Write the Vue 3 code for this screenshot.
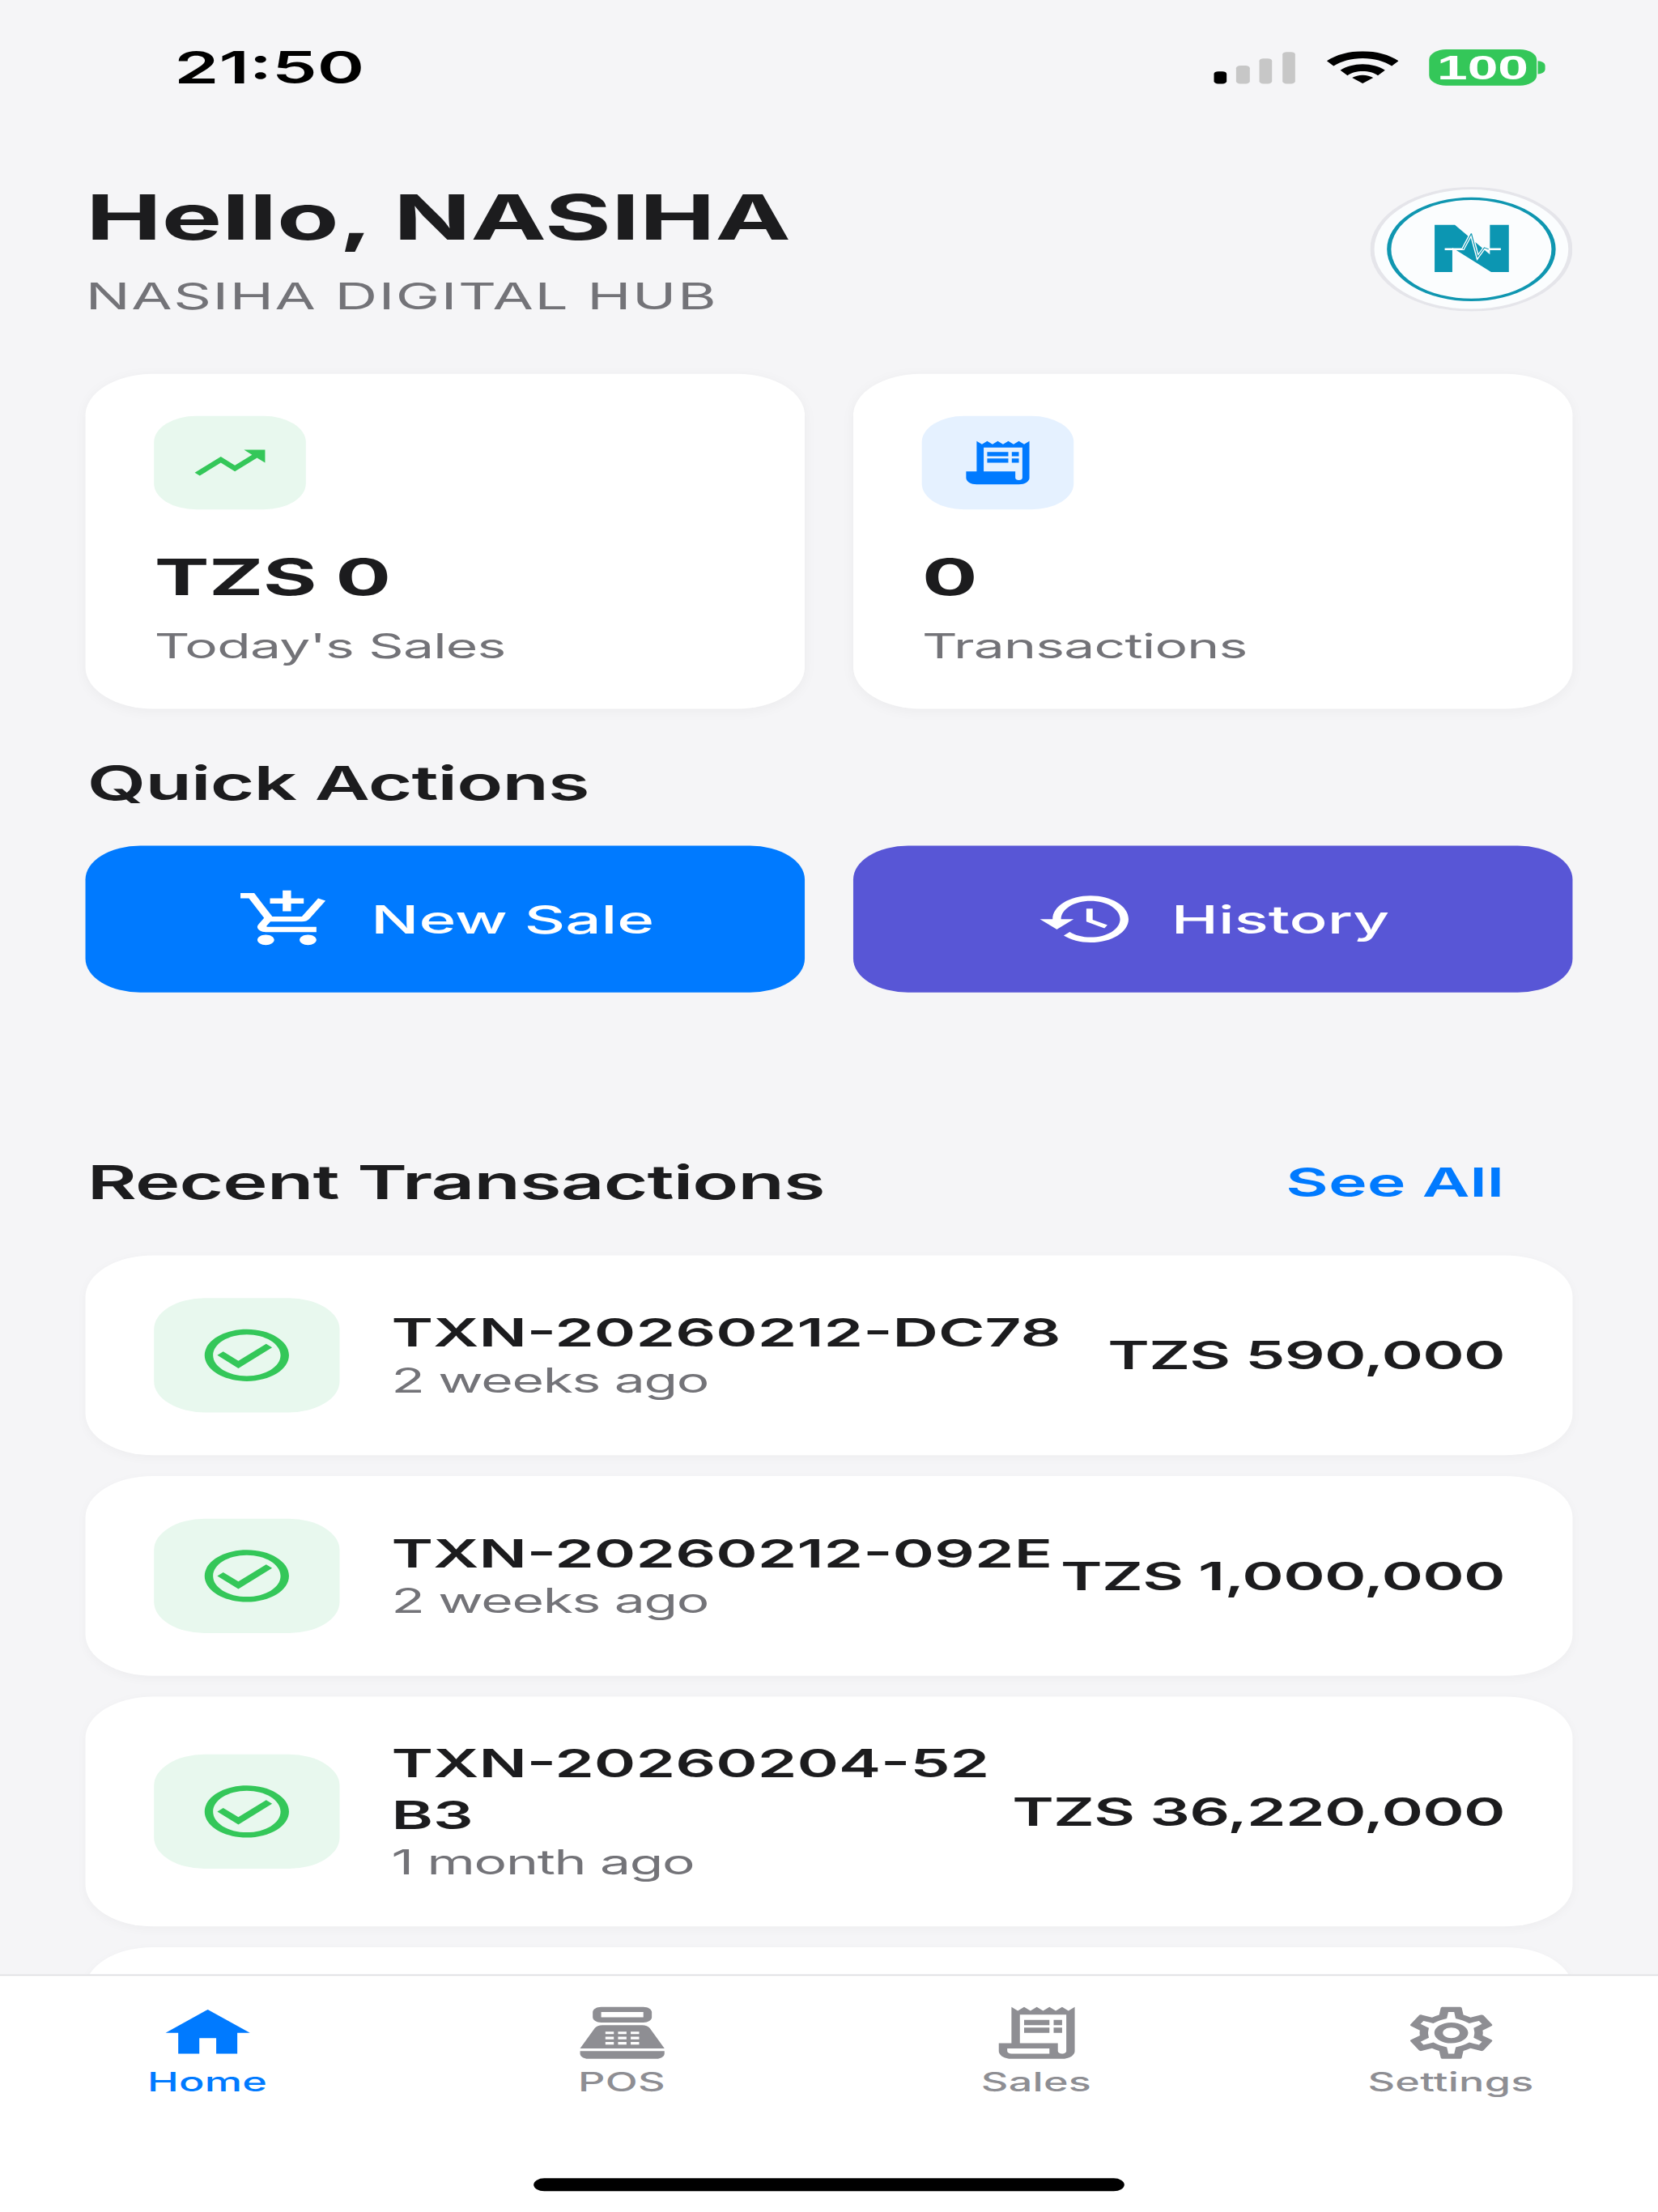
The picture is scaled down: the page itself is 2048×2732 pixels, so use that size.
<script setup>
const receiptLines = 'M9 7h6v2H9z M16 7h2v2h-2z M9 10h6v2H9z M16 10h2v2h-2z'
const receiptFilled = 'M19.5 3.5 18 2l-1.5 1.5L15 2l-1.5 1.5L12 2l-1.5 1.5L9 2 7.5 3.5 6 2v14H3v3c0 1.66 1.34 3 3 3h12c1.66 0 3-1.34 3-3V2l-1.5 1.5zM19 19c0 .55-.45 1-1 1s-1-.45-1-1v-3H8V5h11v14z ' + receiptLines
const receiptOutline = 'M19.5 3.5L18 2l-1.5 1.5L15 2l-1.5 1.5L12 2l-1.5 1.5L9 2 7.5 3.5 6 2v14H3v3c0 1.66 1.34 3 3 3h12c1.66 0 3-1.34 3-3V2l-1.5 1.5zM15 20H6c-.55 0-1-.45-1-1v-1h10v2zm4-1c0 .55-.45 1-1 1s-1-.45-1-1v-3H8V5h11v14z ' + receiptLines
const checkIcon = 'M16.59 7.58L10 14.17l-3.59-3.58L5 12l5 5 8-8zM12 2C6.48 2 2 6.48 2 12s4.48 10 10 10 10-4.48 10-10S17.52 2 12 2zm0 18c-4.42 0-8-3.58-8-8s3.58-8 8-8 8 3.58 8 8-3.58 8-8 8z'
const cartIcon = 'M11 9h2V6h3V4h-3V1h-2v3H8v2h3v3zm-4 9c-1.1 0-1.99.9-1.99 2S5.9 22 7 22s2-.9 2-2-.9-2-2-2zm10 0c-1.1 0-1.99.9-1.99 2s.89 2 1.99 2 2-.9 2-2-.9-2-2-2zm-9.83-3.25l.03-.12.9-1.63h7.45c.75 0 1.41-.41 1.75-1.03l3.86-7.01L19.42 4h-.01l-1.1 2-2.76 5H8.53l-.13-.27L6.16 6l-.95-2-.94-2H1v2h2l3.6 7.59-1.35 2.45c-.16.28-.25.61-.25.96 0 1.1.9 2 2 2h12v-2H7.42c-.13 0-.25-.11-.25-.25z'
const historyIcon = 'M13 3c-4.97 0-9 4.03-9 9H1l3.89 3.89.07.14L9 12H6c0-3.87 3.13-7 7-7s7 3.13 7 7-3.13 7-7 7c-1.93 0-3.68-.79-4.94-2.06l-1.42 1.42C8.27 19.99 10.51 21 13 21c4.97 0 9-4.03 9-9s-4.03-9-9-9zm-1 5v5l4.28 2.54.72-1.21-3.5-2.08V8H12z'
const homeIcon = 'M10 20v-6h4v6h5v-8h3L12 3 2 12h3v8z'
const posIcon = 'M17 2H7c-1.1 0-2 .9-2 2v2c0 1.1.9 2 2 2h10c1.1 0 2-.9 2-2V4c0-1.1-.9-2-2-2zm0 4H7V4h10v2z M20 22H4c-1.1 0-2-.9-2-2v-1h20v1c0 1.1-.9 2-2 2z M18.53 10.19C18.21 9.47 17.49 9 16.7 9H7.3c-.79 0-1.51.47-1.83 1.19L2 18h20l-3.47-7.81z M8 11.5h2v1H8z M11 11.5h2v1h-2z M14 11.5h2v1h-2z M8 13.5h2v1H8z M11 13.5h2v1h-2z M14 13.5h2v1h-2z M8 15.5h2v1H8z M11 15.5h2v1h-2z M14 15.5h2v1h-2z'
const gearIcon = 'M19.43 12.98c.04-.32.07-.64.07-.98s-.03-.66-.07-.98l2.11-1.65c.19-.15.24-.42.12-.64l-2-3.46c-.12-.22-.39-.3-.61-.22l-2.49 1c-.52-.4-1.08-.73-1.69-.98l-.38-2.65C14.46 2.18 14.25 2 14 2h-4c-.25 0-.46.18-.49.42l-.38 2.65c-.61.25-1.17.59-1.69.98l-2.49-1c-.23-.09-.49 0-.61.22l-2 3.46c-.13.22-.07.49.12.64l2.11 1.65c-.04.32-.07.65-.07.98s.03.66.07.98l-2.11 1.65c-.19.15-.24.42-.12.64l2 3.46c.12.22.39.3.61.22l2.49-1c.52.4 1.08.73 1.69.98l.38 2.65c.03.24.24.42.49.42h4c.25 0 .46-.18.49-.42l.38-2.65c.61-.25 1.17-.59 1.69-.98l2.49 1c.23.09.49 0 .61-.22l2-3.46c.12-.22.07-.49-.12-.64l-2.11-1.65zM17.45 11.27c.04.31.05.52.05.73 0 .21-.02.43-.05.73l-.14 1.13.89.7 1.08.84-.7 1.21-1.27-.51-1.04-.42-.9.68c-.43.32-.84.56-1.25.73l-1.06.43-.16 1.13-.2 1.35h-1.4l-.19-1.35-.16-1.13-1.06-.43c-.43-.18-.83-.41-1.23-.71l-.91-.7-1.06.43-1.27.51-.7-1.21 1.08-.84.89-.7-.14-1.13c-.03-.31-.05-.54-.05-.74s.02-.43.05-.73l.14-1.13-.89-.7-1.08-.84.7-1.21 1.27.51 1.04.42.9-.68c.43-.32.84-.56 1.25-.73l1.06-.43.16-1.13.2-1.35h1.39l.19 1.35.16 1.13 1.06.43c.43.18.83.41 1.23.71l.91.7 1.06-.43 1.27-.51.7 1.21-1.07.85-.89.7.14 1.13zM12 8c-2.21 0-4 1.79-4 4s1.79 4 4 4 4-1.79 4-4-1.79-4-4-4zm0 6c-1.1 0-2-.9-2-2s.9-2 2-2 2 .9 2 2-.9 2-2 2z'

const transactions = [
  { id: 'TXN-20260212-DC78', when: '2 weeks ago', amount: 'TZS 590,000' },
  { id: 'TXN-20260212-092E', when: '2 weeks ago', amount: 'TZS 1,000,000' },
  { id: 'TXN-20260204-52B3', when: '1 month ago', amount: 'TZS 36,220,000' },
]

const tabs = [
  { label: 'Home', path: homeIcon, active: true },
  { label: 'POS', path: posIcon, evenodd: true },
  { label: 'Sales', path: receiptOutline },
  { label: 'Settings', path: gearIcon },
]
</script>

<template>
  <div class="page">
    <div class="screen">
      <div class="status-bar">
        <span class="clock">21:50</span>
        <div class="status-icons">
          <div class="signal">
            <i class="bar on" style="height: 4.7px"></i>
            <i class="bar" style="height: 7px"></i>
            <i class="bar" style="height: 9.6px"></i>
            <i class="bar" style="height: 12.3px"></i>
          </div>
          <svg class="wifi" viewBox="0 0 17 12.4" width="17" height="12.4">
            <path d="M0 3.7C2.2 1.4 5.2 0 8.5 0s6.3 1.4 8.5 3.7l-1.6 2C13.600 3.800 11.200 2.700 8.500 2.700S3.400 3.800 1.600 5.700z" />
            <path d="M3.200 7.300C4.600 5.900 6.500 5 8.500 5s3.900.9 5.300 2.300l-1.700 2C11.200 8.300 9.900 7.700 8.500 7.700s-2.700.6-3.600 1.600z" />
            <path d="M6 10.200c.7-.6 1.500-1 2.500-1s1.800.4 2.500 1l-2.500 2.200z" />
          </svg>
          <div class="battery">
            <span class="battery-level">100</span>
            <i class="battery-nub"></i>
          </div>
        </div>
      </div>

      <main class="content">
        <header class="header">
          <div>
            <h1 class="hello">Hello, NASIHA</h1>
            <p class="company">NASIHA DIGITAL HUB</p>
          </div>
          <div class="avatar">
            <svg viewBox="0 0 48 48" width="48" height="48">
              <circle cx="24" cy="24" r="19.500" fill="none" stroke="#0f96b0" stroke-width="1" />
              <path d="M15.300 14.600H20.100L28.400 26V14.600H32.900V32.800H28.700L19.500 23.400V32.800H15.300z" fill="#0c96b2" />
              <path d="M17.700 24H22L24 17.900 25.500 27 27.100 23.400 28.100 24H31" fill="none" stroke="#fff" stroke-width=".8" />
              <path d="M22 24L24 17.900 25.500 27 27.100 23.400 28.100 24" fill="none" stroke="#0c96b2" stroke-width=".25" />
            </svg>
          </div>
        </header>

        <section class="stats">
          <div class="stat-card">
            <div class="stat-icon green">
              <svg viewBox="0 0 24 24" width="20" height="20"><path d="M16 6l2.290 2.290-4.880 4.880-4-4L2 16.590 3.410 18l6-6 4 4 6.300-6.290L22 12V6z" /></svg>
            </div>
            <div class="stat-value">TZS 0</div>
            <div class="stat-label">Today's Sales</div>
          </div>
          <div class="stat-card">
            <div class="stat-icon blue">
              <svg viewBox="0 0 24 24" width="20" height="20"><path :d="receiptFilled" /></svg>
            </div>
            <div class="stat-value">0</div>
            <div class="stat-label">Transactions</div>
          </div>
        </section>

        <h2 class="section-title quick-title">Quick Actions</h2>
        <section class="actions">
          <button class="action new-sale">
            <svg viewBox="0 0 24 24" width="24" height="24"><path :d="cartIcon" /></svg>
            <span>New Sale</span>
          </button>
          <button class="action history">
            <svg viewBox="0 0 24 24" width="24" height="24"><path :d="historyIcon" /></svg>
            <span>History</span>
          </button>
        </section>

        <div class="recent-head">
          <h2 class="section-title">Recent Transactions</h2>
          <a class="see-all">See All</a>
        </div>

        <ul class="txn-list">
          <li v-for="txn in transactions" :key="txn.id" class="txn">
            <div class="txn-icon">
              <svg viewBox="0 0 24 24" width="24" height="24"><path :d="checkIcon" /></svg>
            </div>
            <div class="txn-info">
              <div class="txn-id">{{ txn.id }}</div>
              <div class="txn-when">{{ txn.when }}</div>
            </div>
            <div class="txn-amount">{{ txn.amount }}</div>
          </li>
          <!-- next row only peeks out above the tab bar -->
          <li class="txn"></li>
        </ul>
      </main>

      <nav class="tabbar">
        <div v-for="tab in tabs" :key="tab.label" class="tab" :class="{ active: tab.active }">
          <svg viewBox="0 0 24 24" width="24" height="24"><path :d="tab.path" :fill-rule="tab.evenodd ? 'evenodd' : 'nonzero'" /></svg>
          <span>{{ tab.label }}</span>
        </div>
        <i class="home-indicator"></i>
      </nav>
    </div>
  </div>
</template>

<style>
html, body {
  margin: 0;
  background: #f5f5f7;
}
</style>

<style scoped>
.page {
  width: 2048px;
  height: 2732px;
  overflow: hidden;
}

/* the capture is a 393x852 phone screen stretched to fill the window.
   zoom keeps fractional sizes from snapping to whole phone pixels */
.screen {
  zoom: 4;
  width: 393px;
  height: 852px;
  transform: scale(1.3028, .80165);
  transform-origin: 0 0;
  display: flex;
  flex-direction: column;
  background: #f5f5f7;
  color: #1c1c1e;
  font-family: Inter, "Liberation Sans", sans-serif;
}

.status-bar {
  flex: none;
  height: 52px;
  display: flex;
  justify-content: space-between;
  align-items: flex-start;
  padding: 15px 28.800px 0 41.300px;
  box-sizing: border-box;
}

.clock {
  font-size: 17px;
  line-height: 22px;
  font-weight: 600;
  color: #000;
}

.status-icons {
  display: flex;
  align-items: flex-end;
  padding-top: 4px;
}

.signal {
  display: flex;
  align-items: flex-end;
  gap: 2.300px;
  height: 12.300px;
  margin-right: 7.500px;
  margin-bottom: .800px;
}

.bar {
  display: block;
  width: 3.100px;
  border-radius: 1px;
  background: #c7c7c7;
}

.bar.on {
  background: #000;
}

.wifi {
  display: block;
  fill: #000;
  margin-right: 7.200px;
  margin-bottom: .800px;
}

.battery {
  position: relative;
  width: 25.500px;
  height: 14px;
  border-radius: 4px;
  background: #34c759;
  display: flex;
  align-items: center;
  justify-content: center;
}

.battery-level {
  font-family: "Liberation Sans", sans-serif;
  font-size: 13px;
  line-height: 14px;
  font-weight: 700;
  color: #fff;
}

.battery-nub {
  position: absolute;
  right: -2px;
  top: 4.500px;
  width: 1.600px;
  height: 5px;
  border-radius: 0 2px 2px 0;
  background: #34c759;
}

.content {
  flex: 1;
  min-height: 0;
  overflow: hidden;
  padding: 0 20.300px;
}

.header {
  display: flex;
  justify-content: space-between;
  align-items: flex-start;
  height: 92px;
  padding-top: 20px;
  box-sizing: border-box;
}

.hello {
  margin: -3px 0 0 .100px;
  font-size: 24px;
  line-height: 29px;
  font-weight: 700;
}

.company {
  margin: 7.700px 0 0;
  font-size: 14px;
  line-height: 17px;
  letter-spacing: .300px;
  color: #737378;
}

.avatar {
  width: 48px;
  height: 48px;
  border-radius: 50%;
  background: #fbfdfe;
  box-shadow: inset 0 0 0 1px #e5e5ea;
}

.avatar svg {
  display: block;
}

.stats,
.actions {
  display: grid;
  grid-template-columns: 1fr 1fr;
  gap: 11.500px;
}

.stat-card {
  height: 129px;
  box-sizing: border-box;
  padding: 16.200px 16.300px 16px;
  border-radius: 16px;
  background: #fff;
  box-shadow: 0 1px 4px rgba(0, 0, 0, .04);
}

.stat-icon {
  width: 36px;
  height: 36px;
  border-radius: 10px;
  display: flex;
  align-items: center;
  justify-content: center;
}

.stat-icon.green {
  background: #e8f8ee;
  fill: #34c759;
}

.stat-icon.blue {
  background: #e5f1ff;
  fill: #007aff;
}

.stat-value {
  margin-top: 14px;
  font-size: 19.500px;
  line-height: 24px;
  letter-spacing: -.100px;
  font-weight: 700;
}

.stat-label {
  margin-top: 6.900px;
  font-size: 13px;
  line-height: 16px;
  letter-spacing: -.150px;
  color: #737378;
}

.section-title {
  margin: 0 0 0 .400px;
  font-size: 18px;
  line-height: 22px;
  letter-spacing: -.170px;
  font-weight: 600;
}

.quick-title {
  margin-top: 17.500px;
  margin-bottom: 13.200px;
}

.action {
  height: 56.600px;
  border: 0;
  border-radius: 13px;
  padding: 0;
  display: flex;
  align-items: center;
  justify-content: center;
  gap: 8px;
  color: #fff;
  fill: #fff;
  font: 500 15px/20px Inter, "Liberation Sans", sans-serif;
}

.new-sale {
  background: #007aff;
}

.history {
  background: #5856d6;
}

.recent-head {
  display: flex;
  justify-content: space-between;
  align-items: center;
  margin-top: 62.100px;
  margin-bottom: 17.050px;
  padding-right: 16.200px;
}

.see-all {
  font-size: 15.500px;
  line-height: 20px;
  font-weight: 600;
  color: #007aff;
}

.txn-list {
  list-style: none;
  margin: 0;
  padding: 0;
  display: flex;
  flex-direction: column;
  gap: 8px;
}

.txn {
  min-height: 77px;
  box-sizing: border-box;
  padding: 15.500px 16px 15.500px 16.100px;
  border-radius: 16px;
  background: #fff;
  display: flex;
  align-items: center;
  box-shadow: 0 1px 3px rgba(0, 0, 0, .03);
}

.txn-icon {
  flex: none;
  width: 44px;
  height: 44px;
  margin-right: 12.400px;
  border-radius: 12px;
  background: #e8f8ee;
  fill: #34c759;
  display: flex;
  align-items: center;
  justify-content: center;
}

.txn-info {
  flex: 1;
  min-width: 0;
}

.txn-id {
  font-size: 15px;
  line-height: 20px;
  font-weight: 600;
  word-break: break-all;
}

.txn-when {
  margin-top: -.400px;
  font-size: 13px;
  line-height: 18px;
  letter-spacing: -.250px;
  color: #737378;
}

.txn-amount {
  flex: none;
  font-size: 15px;
  line-height: 20px;
  letter-spacing: -.150px;
  font-weight: 600;
}

.tabbar {
  flex: none;
  position: relative;
  height: 91.500px;
  box-sizing: border-box;
  display: grid;
  grid-template-columns: repeat(4, 1fr);
  align-items: start;
  padding-top: 10px;
  background: #fff;
  border-top: .500px solid #dcdce0;
}

.tab {
  display: flex;
  flex-direction: column;
  align-items: center;
  gap: 1px;
  fill: #8e8e93;
  color: #8e8e93;
  font-size: 10px;
  line-height: 12px;
  letter-spacing: .050px;
  font-weight: 500;
}

.tab svg {
  display: block;
}

.tab.active {
  fill: #007aff;
  color: #007aff;
}

.home-indicator {
  position: absolute;
  left: 126.500px;
  bottom: 8px;
  width: 140px;
  height: 5px;
  border-radius: 3px;
  background: #000;
}
</style>
